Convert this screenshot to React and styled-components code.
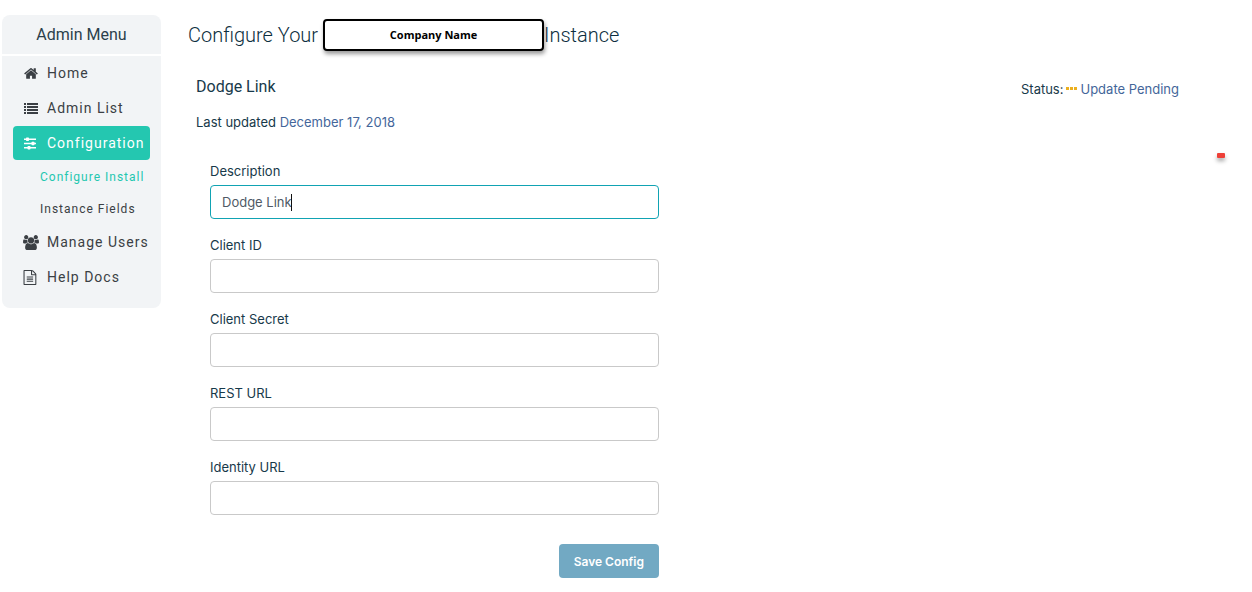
import React from "react";
import styled, { createGlobalStyle, css } from "styled-components";

const GlobalStyle = createGlobalStyle`
  *, *::before, *::after { box-sizing: border-box; }
  body {
    margin: 0;
    background: #fff;
    color: #17394a;
    font-family: Inter, "Liberation Sans", sans-serif;
    font-size: 13px;
    line-height: 20px;
  }
`;

const Page = styled.div`
  position: relative;
  display: flex;
  align-items: flex-start;
  gap: 27px;
  padding: 15px 24px 14px 2px;
`;

const Sidebar = styled.nav`
  flex: 0 0 159px;
  padding-bottom: 13px;
  border-radius: 8px;
  background: #f2f4f6;
  font-family: Roboto, sans-serif;
`;

const MenuTitle = styled.h2`
  margin: 0;
  padding: 0;
  border-bottom: 2px solid #fff;
  color: #2b3f4b;
  font-size: 16px;
  font-weight: 400;
  line-height: 39px;
  text-align: center;
`;

const MenuList = styled.ul`
  margin: 0;
  padding: 0 11px;
  list-style: none;
`;

const MenuLink = styled.a`
  display: flex;
  align-items: center;
  gap: 8px;
  height: 34px;
  margin-bottom: 1px;
  padding-left: 10px;
  border-radius: 4px;
  color: #3b3f44;
  font-size: 14px;
  letter-spacing: 1px;
  white-space: nowrap;
  text-decoration: none;
  ${({ $active }) => $active && css`
    background: #24c7b0;
    color: #fff;
  `}
`;

const SubLink = styled.a`
  display: block;
  padding-left: 27px;
  color: ${({ $active }) => ($active ? "#24c7b0" : "#3b3f44")};
  font-size: 12px;
  letter-spacing: 1px;
  line-height: 32px;
  white-space: nowrap;
  text-decoration: none;
`;

const IconSvg = styled.svg`
  flex: none;
  width: 16px;
  height: 15px;
  fill: currentColor;
`;

const Main = styled.main`
  flex: 1;
  min-width: 0;
`;

const Title = styled.h1`
  display: flex;
  align-items: center;
  margin: 0;
  height: 40px;
  color: #0d2f40;
  font-family: Roboto, sans-serif;
  font-size: 20px;
  font-weight: 300;
  white-space: nowrap;
`;

const CompanyBox = styled.span`
  width: 221px;
  margin-left: 5px;
  border: 2px solid #000;
  border-radius: 4px;
  background: #fff;
  box-shadow: 1px 3px 4px rgba(0, 0, 0, 0.4);
  color: #000;
  font-family: "Open Sans", sans-serif;
  font-size: 11px;
  font-weight: 700;
  line-height: 28px;
  text-align: center;
`;

const Summary = styled.section`
  display: flex;
  justify-content: space-between;
  margin: 20px 49px 0 8px;
`;

const InstanceName = styled.h2`
  margin: 0 0 13px;
  font-family: Roboto, sans-serif;
  font-size: 16px;
  font-weight: 400;
  line-height: 24px;
`;

const Paragraph = styled.p`
  margin: 0;
`;

const Status = styled.p`
  display: flex;
  align-items: center;
  gap: 3px;
  height: 20px;
  margin: 4px 0 0;
`;

const Accent = styled.span`
  color: #44669a;
`;

const Dots = styled.svg`
  width: 11px;
  height: 3px;
  margin-bottom: 2px;
  fill: #ecb01f;
`;

const Form = styled.form`
  display: flex;
  flex-direction: column;
  gap: 16px;
  width: 100%;
  max-width: 471px;
  padding: 29px 0 0 22px;
`;

const Field = styled.div`
  display: flex;
  flex-direction: column;
  gap: 4px;
`;

const Control = styled.div`
  position: relative;
  display: flex;
`;

const Input = styled.input`
  width: 100%;
  height: 34px;
  padding: 0 11px;
  border: 1px solid #c9c9c9;
  border-radius: 4px;
  background: #fff;
  color: #505a66;
  font: inherit;
  caret-color: transparent;
  &:focus {
    border-color: #11a3b3;
    outline: none;
  }
`;

const Caret = styled.span`
  position: absolute;
  top: 9px;
  left: 81px;
  width: 1px;
  height: 17px;
  background: #111;
`;

const SaveButton = styled.button`
  align-self: flex-end;
  height: 34px;
  margin-top: 13px;
  padding: 0 15px;
  border: 0;
  border-radius: 4px;
  background: #72a9c3;
  color: #fff;
  font-family: Inter, sans-serif;
  font-size: 12px;
  font-weight: 600;
`;

const Marker = styled.span`
  position: absolute;
  top: 153px;
  right: 27px;
  width: 8px;
  height: 5px;
  border-radius: 1px;
  background: #ee4038;
  box-shadow: 0 3px 4px rgba(0, 0, 0, 0.35);
`;

const HomeIcon = () => (
  <IconSvg viewBox="0 0 1792 1792" aria-hidden="true">
    <path d="M1472 992v480q0 26-19 45t-45 19h-384v-384h-256v384h-384q-26 0-45-19t-19-45v-480q0-1 .5-3t.5-3l575-474 575 474q1 2 1 6zm223-69l-62 74q-8 9-21 11h-3q-13 0-21-7l-692-577-692 577q-12 8-24 7-13-2-21-11l-62-74q-8-10-7-23.5t11-21.5l719-599q32-26 76-26t76 26l244 204v-195q0-14 9-23t23-9h192q14 0 23 9t9 23v408l219 182q10 8 11 21.5t-7 23.5z" />
  </IconSvg>
);

const ListIcon = () => (
  <IconSvg viewBox="0 0 16 15" aria-hidden="true">
    {[2, 5, 8, 11].map((y) => (
      <path key={y} d={`M1 ${y}h2v2h-2zM4 ${y}h11v2h-11z`} />
    ))}
  </IconSvg>
);

const SlidersIcon = () => (
  <IconSvg viewBox="0 0 16 15" aria-hidden="true">
    <path d="M1 2.5h12v1.4H1zM1 6.8h12v1.4H1zM1 11.1h12v1.4H1z" />
    <rect x="3" y="1.5" width="3" height="3.4" rx=".7" />
    <rect x="8.5" y="5.8" width="3" height="3.4" rx=".7" />
    <rect x="4.5" y="10.1" width="3" height="3.4" rx=".7" />
  </IconSvg>
);

const UsersIcon = () => (
  <IconSvg viewBox="0 0 1920 1792" aria-hidden="true">
    <path d="M593 896q-162 5-265 128h-134q-82 0-138-40.5t-56-118.5q0-353 124-353 6 0 43.5 21t97.5 42.5 119 21.5q67 0 133-23-5 37-5 66 0 139 81 256zm1071 637q0 120-73 189.5t-194 69.5h-874q-121 0-194-69.5t-73-189.5q0-53 3.5-103.5t14-109 26.5-108.5 43-97.5 62-81 85.5-53.5 111.5-20q10 0 43 21.5t73 48 107 48 135 21.5 135-21.5 107-48 73-48 43-21.5q61 0 111.5 20t85.5 53.5 62 81 43 97.5 26.5 108.5 14 109 3.5 103.5zm-1024-1277q0 106-75 181t-181 75-181-75-75-181 75-181 181-75 181 75 75 181zm704 384q0 159-112.5 271.5t-271.5 112.5-271.5-112.5-112.5-271.5 112.5-271.5 271.5-112.5 271.5 112.5 112.5 271.5zm576 225q0 78-56 118.5t-138 40.5h-134q-103-123-265-128 81-117 81-256 0-29-5-66 66 23 133 23 59 0 119-21.5t97.5-42.5 43.5-21q124 0 124 353zm-128-609q0 106-75 181t-181 75-181-75-75-181 75-181 181-75 181 75 75 181z" />
  </IconSvg>
);

const DocIcon = () => (
  <IconSvg viewBox="128 0 1792 1792" aria-hidden="true">
    <path d="M1596 380q28 28 48 76t20 88v1152q0 40-28 68t-68 28h-1344q-40 0-68-28t-28-68v-1600q0-40 28-68t68-28h896q40 0 88 20t76 48zm-444-244v376h376q-10-29-22-41l-313-313q-12-12-41-22zm384 1528v-1024h-416q-40 0-68-28t-28-68v-416h-768v1536h1280zm-1024-864q0-14 9-23t23-9h704q14 0 23 9t9 23v64q0 14-9 23t-23 9h-704q-14 0-23-9t-9-23v-64zm736 224q14 0 23 9t9 23v64q0 14-9 23t-23 9h-704q-14 0-23-9t-9-23v-64q0-14 9-23t23-9h704zm0 256q14 0 23 9t9 23v64q0 14-9 23t-23 9h-704q-14 0-23-9t-9-23v-64q0-14 9-23t23-9h704z" />
  </IconSvg>
);

const menu = [
  { label: "Home", Icon: HomeIcon },
  { label: "Admin List", Icon: ListIcon },
  {
    label: "Configuration",
    Icon: SlidersIcon,
    active: true,
    children: [{ label: "Configure Install", active: true }, { label: "Instance Fields" }],
  },
  { label: "Manage Users", Icon: UsersIcon },
  { label: "Help Docs", Icon: DocIcon },
];

const fields = [
  { id: "description", label: "Description", value: "Dodge Link" },
  { id: "client-id", label: "Client ID" },
  { id: "client-secret", label: "Client Secret" },
  { id: "rest-url", label: "REST URL" },
  { id: "identity-url", label: "Identity URL" },
];

export default function App() {
  return (
    <>
      <GlobalStyle />
      <Page>
        <Sidebar>
          <MenuTitle>Admin Menu</MenuTitle>
          <MenuList>
            {menu.map(({ label, Icon, active, children = [] }) => (
              <React.Fragment key={label}>
                <li>
                  <MenuLink href="#" $active={active}>
                    <Icon />
                    {label}
                  </MenuLink>
                </li>
                {children.map((child) => (
                  <li key={child.label}>
                    <SubLink href="#" $active={child.active}>{child.label}</SubLink>
                  </li>
                ))}
              </React.Fragment>
            ))}
          </MenuList>
        </Sidebar>
        <Main>
          <Title>
            Configure Your <CompanyBox>Company Name</CompanyBox>Instance
          </Title>
          <Summary>
            <div>
              <InstanceName>Dodge Link</InstanceName>
              <Paragraph>Last updated <Accent>December 17, 2018</Accent></Paragraph>
            </div>
            <Status>
              Status:
              <Dots viewBox="0 0 11 3" aria-hidden="true">
                <path d="M0 0h3v3H0zM4 0h3v3H4zM8 0h3v3H8z" />
              </Dots>
              <Accent>Update Pending</Accent>
            </Status>
          </Summary>
          <Form onSubmit={(event) => event.preventDefault()}>
            {fields.map(({ id, label, value }) => (
              <Field key={id}>
                <label htmlFor={id}>{label}</label>
                <Control>
                  <Input id={id} type="text" defaultValue={value} autoFocus={Boolean(value)} />
                  {value && <Caret />}
                </Control>
              </Field>
            ))}
            <SaveButton type="submit">Save Config</SaveButton>
          </Form>
        </Main>
        <Marker />
      </Page>
    </>
  );
}
